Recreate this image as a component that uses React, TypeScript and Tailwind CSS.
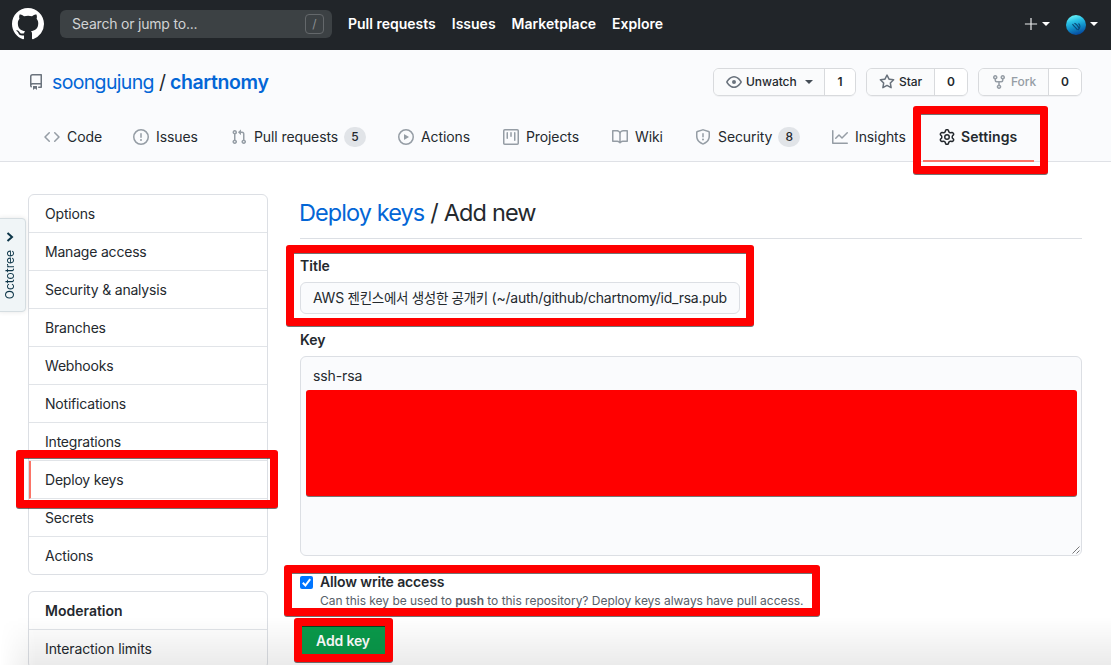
import React from "react";

const icons = {
  github:
    "M8 0C3.58 0 0 3.58 0 8c0 3.54 2.29 6.53 5.47 7.59.4.07.55-.17.55-.38 0-.19-.01-.82-.01-1.49-2.01.37-2.53-.49-2.69-.94-.09-.23-.48-.94-.82-1.13-.28-.15-.68-.52-.01-.53.63-.01 1.08.58 1.23.82.72 1.21 1.87.87 2.33.66.07-.52.28-.87.51-1.07-1.78-.2-3.64-.89-3.64-3.95 0-.87.31-1.59.82-2.15-.08-.2-.36-1.02.08-2.12 0 0 .67-.21 2.2.82.64-.18 1.32-.27 2-.27.68 0 1.36.09 2 .27 1.53-1.04 2.2-.82 2.2-.82.44 1.1.16 1.92.08 2.12.51.56.82 1.27.82 2.15 0 3.07-1.87 3.75-3.65 3.95.29.25.54.73.54 1.48 0 1.07-.01 1.93-.01 2.2 0 .21.15.46.55.38A8.013 8.013 0 0016 8c0-4.42-3.58-8-8-8z",
  repo: "M2 2.5A2.5 2.5 0 014.5 0h8.75a.75.75 0 01.75.75v12.5a.75.75 0 01-.75.75h-2.5a.75.75 0 110-1.5h1.75v-2h-8a1 1 0 00-.714 1.7.75.75 0 01-1.072 1.05A2.495 2.495 0 012 11.5v-9zm10.5-1V9h-8c-.356 0-.694.074-1 .208V2.5a1 1 0 011-1h8zM5 12.25v3.25a.25.25 0 00.4.2l1.45-1.087a.25.25 0 01.3 0L8.6 15.7a.25.25 0 00.4-.2v-3.25a.25.25 0 00-.25-.25h-3.5a.25.25 0 00-.25.25z",
  code: "M4.72 3.22a.75.75 0 011.06 1.06L2.06 8l3.72 3.72a.75.75 0 11-1.06 1.06L.47 8.53a.75.75 0 010-1.06l4.25-4.25zm6.56 0a.75.75 0 10-1.06 1.06L13.94 8l-3.72 3.72a.75.75 0 101.06 1.06l4.25-4.25a.75.75 0 000-1.06l-4.25-4.25z",
  issue:
    "M8 1.5a6.5 6.5 0 100 13 6.5 6.5 0 000-13zM0 8a8 8 0 1116 0A8 8 0 010 8zm9 3a1 1 0 11-2 0 1 1 0 012 0zm-.25-6.25a.75.75 0 00-1.5 0v3.5a.75.75 0 001.5 0v-3.5z",
  pull: "M7.177 3.073L9.573.677A.25.25 0 0110 .854v4.792a.25.25 0 01-.427.177L7.177 3.427a.25.25 0 010-.354zM3.75 2.5a.75.75 0 100 1.5.75.75 0 000-1.5zm-2.25.75a2.25 2.25 0 113 2.122v5.256a2.251 2.251 0 11-1.5 0V5.372A2.25 2.25 0 011.5 3.25zM11 2.5h-1V4h1a1 1 0 011 1v5.628a2.251 2.251 0 101.5 0V5A2.5 2.5 0 0011 2.5zm1 10.25a.75.75 0 111.5 0 .75.75 0 01-1.5 0zM3.75 12a.75.75 0 100 1.5.75.75 0 000-1.5z",
  play: "M1.5 8a6.5 6.5 0 1113 0 6.5 6.5 0 01-13 0zM8 0a8 8 0 100 16A8 8 0 008 0zM6.379 5.227A.25.25 0 006 5.442v5.117a.25.25 0 00.379.214l4.264-2.559a.25.25 0 000-.428L6.379 5.227z",
  project:
    "M1.75 0A1.75 1.75 0 000 1.75v12.5C0 15.216.784 16 1.75 16h12.5A1.75 1.75 0 0016 14.25V1.75A1.75 1.75 0 0014.25 0H1.75zM1.5 1.75a.25.25 0 01.25-.25h12.5a.25.25 0 01.25.25v12.5a.25.25 0 01-.25.25H1.75a.25.25 0 01-.25-.25V1.75zM11.75 3a.75.75 0 00-.75.75v7.5a.75.75 0 001.5 0v-7.5a.75.75 0 00-.75-.75zm-8.25.75a.75.75 0 011.5 0v5.5a.75.75 0 01-1.5 0v-5.5zM8 3a.75.75 0 00-.75.75v3.5a.75.75 0 001.5 0v-3.5A.75.75 0 008 3z",
  book: "M0 1.75A.75.75 0 01.75 1h4.253c1.227 0 2.317.59 3 1.501A3.744 3.744 0 0111.006 1h4.245a.75.75 0 01.75.75v10.5a.75.75 0 01-.75.75h-4.507a2.25 2.25 0 00-1.591.659l-.622.621a.75.75 0 01-1.06 0l-.622-.621A2.25 2.25 0 005.258 13H.75a.75.75 0 01-.75-.75V1.75zm8.755 3a2.25 2.25 0 012.25-2.25H14.5v9h-3.757c-.71 0-1.4.201-1.992.572l.004-7.322zm-1.504 7.324l.004-5.073-.002-2.253A2.25 2.25 0 005.003 2.5H1.5v9h3.757a3.75 3.75 0 011.994.574z",
  shield:
    "M7.467.133a1.75 1.75 0 011.066 0l5.25 1.68A1.75 1.75 0 0115 3.48V7c0 1.566-.32 3.182-1.303 4.682-.983 1.498-2.585 2.813-5.032 3.855a1.7 1.7 0 01-1.33 0c-2.447-1.042-4.049-2.357-5.032-3.855C1.32 10.182 1 8.566 1 7V3.48a1.75 1.75 0 011.217-1.667l5.25-1.68zm.61 1.429a.25.25 0 00-.153 0l-5.25 1.68a.25.25 0 00-.174.238V7c0 1.358.275 2.666 1.057 3.86.784 1.194 2.121 2.34 4.366 3.297a.2.2 0 00.154 0c2.245-.956 3.582-2.104 4.366-3.298C13.225 9.666 13.5 8.36 13.5 7V3.48a.25.25 0 00-.174-.237l-5.25-1.68zM9 10.5a1 1 0 11-2 0 1 1 0 012 0zm-.25-5.75a.75.75 0 10-1.5 0v3a.75.75 0 001.5 0v-3z",
  graph:
    "M1.5 1.75a.75.75 0 00-1.5 0v12.5c0 .414.336.75.75.75h14.5a.75.75 0 000-1.5H1.5V1.75zm14.28 2.53a.75.75 0 00-1.06-1.06L10 7.94 7.53 5.47a.75.75 0 00-1.06 0L3.22 8.72a.75.75 0 001.06 1.06L7 7.06l2.47 2.47a.75.75 0 001.06 0l5.25-5.25z",
  gear: "M7.429 1.525a6.593 6.593 0 011.142 0c.036.003.108.036.137.146l.289 1.105c.147.56.55.967.997 1.189.174.086.341.183.501.29.417.278.97.423 1.53.27l1.102-.303c.11-.03.175.016.195.046.219.31.41.641.573.989.014.031.022.11-.059.19l-.815.806c-.411.406-.562.957-.53 1.456a4.588 4.588 0 010 .582c-.032.499.119 1.05.53 1.456l.815.806c.08.08.073.159.059.19a6.494 6.494 0 01-.573.99c-.02.029-.086.074-.195.045l-1.103-.303c-.559-.153-1.112-.008-1.529.27-.16.107-.327.204-.5.29-.449.222-.851.628-.998 1.189l-.289 1.105c-.029.11-.101.143-.137.146a6.613 6.613 0 01-1.142 0c-.036-.003-.108-.037-.137-.146l-.289-1.105c-.147-.56-.55-.967-.997-1.189a4.502 4.502 0 01-.501-.29c-.417-.278-.97-.423-1.53-.27l-1.102.303c-.11.03-.175-.016-.195-.046a6.492 6.492 0 01-.573-.989c-.014-.031-.022-.11.059-.19l.815-.806c.411-.406.562-.957.53-1.456a4.587 4.587 0 010-.582c.032-.499-.119-1.05-.53-1.456l-.815-.806c-.08-.08-.073-.159-.059-.19a6.44 6.44 0 01.573-.99c.02-.029.086-.075.195-.045l1.103.303c.559.153 1.112.008 1.529-.27.16-.107.327-.204.5-.29.449-.222.851-.628.998-1.189l.289-1.105c.029-.11.101-.143.137-.146zM8 0c-.236 0-.47.01-.701.03-.743.065-1.29.615-1.458 1.261l-.29 1.106c-.017.066-.078.158-.211.224a5.994 5.994 0 00-.668.386c-.123.082-.233.09-.3.071L3.27 2.776c-.644-.177-1.392.02-1.82.63a7.977 7.977 0 00-.704 1.217c-.315.675-.111 1.422.363 1.891l.815.806c.05.048.098.147.088.294a6.084 6.084 0 000 .772c.01.147-.038.246-.088.294l-.815.806c-.474.469-.678 1.216-.363 1.891.2.428.436.835.704 1.218.428.609 1.176.806 1.82.63l1.103-.303c.066-.019.176-.011.299.071.213.143.436.272.668.386.133.066.194.158.212.224l.289 1.106c.169.646.715 1.196 1.458 1.26a8.094 8.094 0 001.402 0c.743-.064 1.29-.614 1.458-1.26l.29-1.106c.017-.066.078-.158.211-.224a5.98 5.98 0 00.668-.386c.123-.082.233-.09.3-.071l1.102.302c.644.177 1.392-.02 1.82-.63.268-.382.505-.789.704-1.217.315-.675.111-1.422-.364-1.891l-.814-.806c-.05-.048-.098-.147-.088-.294a6.1 6.1 0 000-.772c-.01-.147.039-.246.088-.294l.814-.806c.475-.469.679-1.216.364-1.891a7.992 7.992 0 00-.704-1.218c-.428-.609-1.176-.806-1.82-.63l-1.103.303c-.066.019-.176.011-.299-.071a5.991 5.991 0 00-.668-.386c-.133-.066-.194-.158-.212-.224L10.16 1.29C9.99.645 9.444.095 8.701.031A8.094 8.094 0 008 0zm1.5 8a1.5 1.5 0 11-3 0 1.5 1.5 0 013 0zM11 8a3 3 0 11-6 0 3 3 0 016 0z",
  eye: "M1.679 7.932c.412-.621 1.242-1.75 2.366-2.717C5.175 4.242 6.527 3.5 8 3.5c1.473 0 2.824.742 3.955 1.715 1.124.967 1.954 2.096 2.366 2.717a.119.119 0 010 .136c-.412.621-1.242 1.75-2.366 2.717C10.825 11.758 9.473 12.5 8 12.5c-1.473 0-2.824-.742-3.955-1.715C2.92 9.818 2.09 8.69 1.679 8.068a.119.119 0 010-.136zM8 2c-1.981 0-3.67.992-4.933 2.078C1.797 5.169.88 6.423.43 7.1a1.619 1.619 0 000 1.798c.45.678 1.367 1.932 2.637 3.024C4.329 13.008 6.019 14 8 14c1.981 0 3.67-.992 4.933-2.078 1.27-1.091 2.187-2.345 2.637-3.023a1.619 1.619 0 000-1.798c-.45-.678-1.367-1.932-2.637-3.023C11.671 2.992 9.981 2 8 2zm0 8a2 2 0 100-4 2 2 0 000 4z",
  star: "M8 .25a.75.75 0 01.673.418l1.882 3.815 4.21.612a.75.75 0 01.416 1.279l-3.046 2.97.719 4.192a.75.75 0 01-1.088.791L8 12.347l-3.766 1.98a.75.75 0 01-1.088-.79l.72-4.194L.818 6.374a.75.75 0 01.416-1.28l4.21-.611L7.327.668A.75.75 0 018 .25zm0 2.445L6.615 5.5a.75.75 0 01-.564.41l-3.097.45 2.24 2.184a.75.75 0 01.216.664l-.528 3.084 2.769-1.456a.75.75 0 01.698 0l2.77 1.456-.53-3.084a.75.75 0 01.216-.664l2.24-2.183-3.096-.45a.75.75 0 01-.564-.41L8 2.694v.001z",
  fork: "M5 3.25a.75.75 0 11-1.5 0 .75.75 0 011.5 0zm0 2.122a2.25 2.25 0 10-1.5 0v.878A2.25 2.25 0 005.75 8.5h1.5v2.128a2.251 2.251 0 101.5 0V8.5h1.5a2.25 2.25 0 002.25-2.25v-.878a2.25 2.25 0 10-1.5 0v.878a.75.75 0 01-.75.75h-4.5A.75.75 0 015 6.25v-.878zm3.75 7.378a.75.75 0 11-1.5 0 .75.75 0 011.5 0zm3-8.75a.75.75 0 100-1.5.75.75 0 000 1.5z",
  plus: "M7.4 1.9h1.2v5.5h5.5v1.2H8.6v5.5H7.4V8.6H1.9V7.4h5.5z",
};

type IconName = keyof typeof icons;

function Icon({ name, className = "size-4" }: { name: IconName; className?: string }) {
  return (
    <svg viewBox="0 0 16 16" fill="currentColor" fillRule="evenodd" className={`shrink-0 ${className}`}>
      <path d={icons[name]} />
    </svg>
  );
}

function Caret({ className = "" }: { className?: string }) {
  return (
    <svg viewBox="0 0 8 4" fill="currentColor" className={`h-1 w-2 shrink-0 ${className}`}>
      <path d="M0 0h8L4 4z" />
    </svg>
  );
}

function TopBar() {
  return (
    <header className="flex h-[50px] items-center bg-[#212529] pl-3 pr-[13px] pb-[2px] text-white">
      <Icon name="github" className="size-8" />
      <div className="ml-4 flex h-7 w-[272px] items-center justify-between rounded-md bg-[#3c4144] pl-3 pr-2 text-[#d1d3d5]">
        <span className="tracking-[-0.2px]">Search or jump to...</span>
        <span className="flex h-5 w-[19px] items-center justify-center rounded border border-[#64686b] text-xs text-[#8a8e91]">
          /
        </span>
      </div>
      <nav className="ml-4 flex gap-4 font-semibold">
        <a>Pull requests</a>
        <a>Issues</a>
        <a>Marketplace</a>
        <a>Explore</a>
      </nav>
      <div className="ml-auto flex items-center">
        <Icon name="plus" className="size-4 text-[#eceded]" />
        <Caret className="ml-[3px]" />
        <svg viewBox="0 0 20 20" className="ml-4 mt-[2px] size-5">
          <defs>
            <linearGradient id="sea" x1="0.3" y1="0" x2="0.6" y2="1">
              <stop offset="0" stopColor="#6ff6f8" />
              <stop offset="0.3" stopColor="#2cc3e6" />
              <stop offset="0.6" stopColor="#1191c9" />
              <stop offset="1" stopColor="#05459c" />
            </linearGradient>
          </defs>
          <circle cx="10" cy="10" r="10" fill="url(#sea)" />
          <path
            d="M6.5 9c1.500 2.600 3.500 3.800 5 6M8.500 8.200c2.500 1.800 4.500 3 4.500 6M12.500 8.500c2 1.800 2 4-.5 6.500"
            fill="none"
            stroke="#0a4a78"
            strokeWidth="1.1"
          />
        </svg>
        <Caret className="ml-1" />
      </div>
    </header>
  );
}

function CountButton({
  icon,
  label,
  count,
  width,
  countWidth,
  caret,
  muted,
}: {
  icon: IconName;
  label: string;
  count: number;
  width: string;
  countWidth: string;
  caret?: boolean;
  muted?: boolean;
}) {
  return (
    <div className="flex h-7 overflow-hidden rounded-md border border-[#d8dadd] text-xs shadow-[0_1px_0_rgba(27,31,35,0.04)]">
      <div
        className={`flex items-center gap-1 bg-[#fafbfc] pl-3 font-medium ${width} ${muted ? "text-[#959da5]" : "text-[#24292e]"}`}
      >
        <Icon name={icon} className={muted ? "size-4" : "size-4 text-[#6a737d]"} />
        <span className="tracking-[-0.05px]">{label}</span>
        {caret && <Caret className="ml-1 text-[#444d56]" />}
      </div>
      <div
        className={`flex items-center justify-center border-l border-[#d8dadd] bg-white font-semibold ${countWidth}`}
      >
        {count}
      </div>
    </div>
  );
}

const tabs: { icon: IconName; label: string; width: string; count?: number }[] = [
  { icon: "code", label: "Code", width: "w-[89px]" },
  { icon: "issue", label: "Issues", width: "w-[98px]" },
  { icon: "pull", label: "Pull requests", width: "w-[167px]", count: 5 },
  { icon: "play", label: "Actions", width: "w-[105px]" },
  { icon: "project", label: "Projects", width: "w-[109px]" },
  { icon: "book", label: "Wiki", width: "w-[83px]" },
  { icon: "shield", label: "Security", width: "w-[137px]", count: 8 },
  { icon: "graph", label: "Insights", width: "w-[107px]" },
];

function RepoHeader() {
  return (
    <section className="h-28 border-b border-[#dfe1e6] bg-[#fafbfd] px-7">
      <div className="flex h-[63px] items-center pr-[1px]">
        <Icon name="repo" className="size-4 text-[#6a737d]" />
        <h1 className="ml-2 flex text-[19.5px] leading-7 text-[#0366d6]">
          <span className="tracking-[-0.65px]">soongujung</span>
          <span className="ml-[5px] mr-1 text-[#24292e]">/</span>
          <span className="font-semibold tracking-[-0.38px]">chartnomy</span>
        </h1>
        <div className="ml-auto flex gap-[10px]">
          <CountButton icon="eye" label="Unwatch" count={1} width="w-[110px]" countWidth="w-[31px]" caret />
          <CountButton icon="star" label="Star" count={0} width="w-[67px]" countWidth="w-[33px]" />
          <CountButton icon="fork" label="Fork" count={0} width="w-[69px]" countWidth="w-[33px]" muted />
        </div>
      </div>
      <nav className="flex h-12">
        {tabs.map((t) => (
          <a key={t.label} className={`flex shrink-0 items-center whitespace-nowrap pl-4 ${t.width}`}>
            <Icon name={t.icon} className="mr-[7px] size-4 text-[#959da5]" />
            <span className="tracking-[-0.1px]">{t.label}</span>
            {t.count && (
              <span className="ml-[6px] flex h-5 min-w-[22px] items-center justify-center rounded-full bg-[#e1e4e8] text-xs font-medium">
                {t.count}
              </span>
            )}
          </a>
        ))}
        <a className="flex h-[49px] w-[111px] shrink-0 items-center border-b-2 border-[#fb7467] pl-4 pt-px font-semibold">
          <Icon name="gear" className="mr-[6px] size-4" />
          <span className="tracking-[0.1px]">Settings</span>
        </a>
      </nav>
    </section>
  );
}

const sections = [
  "Options",
  "Manage access",
  "Security & analysis",
  "Branches",
  "Webhooks",
  "Notifications",
  "Integrations",
  "Deploy keys",
  "Secrets",
  "Actions",
];

function Sidebar() {
  return (
    <aside className="flex w-60 shrink-0 flex-col gap-4">
      <ul className="divide-y divide-[#e1e4e8] overflow-hidden rounded-md border border-[#dcdfe4] tracking-[-0.2px]">
        {sections.map((s) => (
          <li
            key={s}
            className={
              s === "Deploy keys"
                ? "flex h-[38px] items-center border-l-2 border-l-[#fb7467] pl-[14px]"
                : "flex h-[38px] items-center pl-4 last:h-[37px]"
            }
          >
            {s}
          </li>
        ))}
      </ul>
      <ul className="divide-y divide-[#e1e4e8] rounded-md border border-[#dcdfe4] tracking-[-0.1px]">
        <li className="flex h-[38px] items-center pl-4 font-semibold tracking-normal">Moderation</li>
        <li className="flex h-[38px] items-center pl-4">Interaction limits</li>
      </ul>
    </aside>
  );
}

function DeployKeyForm() {
  return (
    <main className="flex w-[782px] flex-col">
      <h2 className="flex h-[45px] items-start border-b border-[#dcdfe4] pt-[3px] text-[23.5px] leading-8">
        <span className="-ml-px tracking-[-0.92px] text-[#0366d6]">Deploy keys</span>
        <span className="ml-[6px] tracking-[-0.85px]">/ Add new</span>
      </h2>
      <label className="mt-[16px] h-[21px] font-semibold leading-[21px]">Title</label>
      <div className="mt-[6px] flex h-8 w-[440px] items-center rounded-md border border-[#dcdfe4] bg-[#fafbfd] pl-3">
        <div className="whitespace-nowrap tracking-[-0.25px]">
          AWS <span className="text-[13.5px] tracking-[-0.3px]">젠킨스에서 생성한 공개키</span>{" "}
          (~/auth/github/chartnomy/id_rsa.pub
        </div>
      </div>
      <label className="mt-[15px] h-[21px] font-semibold leading-[21px]">Key</label>
      <div className="relative mt-[6px] h-[200px] rounded-md border border-[#dcdfe4] bg-[#fafbfd] pl-3 pt-[9px] tracking-[-0.1px]">
        ssh-rsa
        <div className="absolute left-[5px] top-[33px] h-[106px] w-[771px] rounded-[3px] bg-[#ff0000] shadow-[0_1px_0_#777]" />
        <svg viewBox="0 0 8 8" className="absolute bottom-px right-px size-2" stroke="#555" strokeWidth="0.8">
          <path d="M0.5 7.5l7-7M4.5 7.5l3-3" />
        </svg>
      </div>
      <div className="mt-[15px] flex">
        <span className="mt-[5px] flex size-[13px] items-center justify-center rounded-[2px] bg-[#0075ff]">
          <svg viewBox="0 0 13 13" className="size-[13px]" fill="none" stroke="white" strokeWidth="2">
            <path d="M2.8 6.8l2.6 2.7 4.8-6.4" />
          </svg>
        </span>
        <div className="ml-[7px]">
          <div className="h-[21px] font-semibold leading-[21px] tracking-[-0.14px]">Allow write access</div>
          <p className="h-[18px] text-xs leading-[17px] tracking-[-0.03px] text-[#586069]">
            Can this key be used to <b className="font-semibold">push</b> to this repository? Deploy keys always have
            pull access.
          </p>
        </div>
      </div>
      <button className="mt-[15px] h-8 w-[86px] bg-[#0a9a4b] font-semibold leading-5 tracking-[-0.15px] text-white">
        Add key
      </button>
    </main>
  );
}

function Highlight({ className }: { className: string }) {
  return (
    <div
      className={`pointer-events-none absolute z-20 rounded-[3px] border-8 border-[#ff0000] drop-shadow-[0_1px_0_rgba(0,0,0,0.55)] ${className}`}
    />
  );
}

export default function App() {
  return (
    <div className="relative h-[665px] w-[1111px] overflow-hidden bg-white font-['Inter','Noto_Sans_CJK_KR',sans-serif] text-sm text-[#24292e]">
      <TopBar />
      <RepoHeader />
      <div className="flex gap-8 px-7 pt-8">
        <Sidebar />
        <DeployKeyForm />
      </div>

      <div className="absolute -left-px top-[218px] flex h-[94px] w-[27px] flex-col items-center rounded-r border border-[#d5dde1] bg-[#f0f5f7] text-[#0c3548] shadow-[0_0_5px_rgba(0,0,0,0.1)]">
        <svg viewBox="0 0 8 10" className="mr-[5px] mt-[13px] h-[10px] w-2 shrink-0" fill="none" stroke="currentColor" strokeWidth="2">
          <path d="M1.5 1L6 5 1.5 9" />
        </svg>
        <span className="mr-[5px] mt-2 rotate-180 text-xs leading-4 [writing-mode:vertical-rl]">Octotree</span>
      </div>

      <div className="pointer-events-none absolute inset-x-0 bottom-0 h-12 bg-linear-to-b from-transparent to-black/8 [mask-image:linear-gradient(to_right,transparent,black_36px)]" />

      <Highlight className="left-[913px] top-[106px] h-[68px] w-[135px]" />
      <Highlight className="left-[286px] top-[245px] h-[81px] w-[468px]" />
      <Highlight className="left-[16px] top-[450px] h-[58px] w-[262px]" />
      <Highlight className="left-[284px] top-[565px] h-[51px] w-[536px]" />
      <Highlight className="left-[294px] top-[618px] h-[44px] w-[99px]" />
    </div>
  );
}
